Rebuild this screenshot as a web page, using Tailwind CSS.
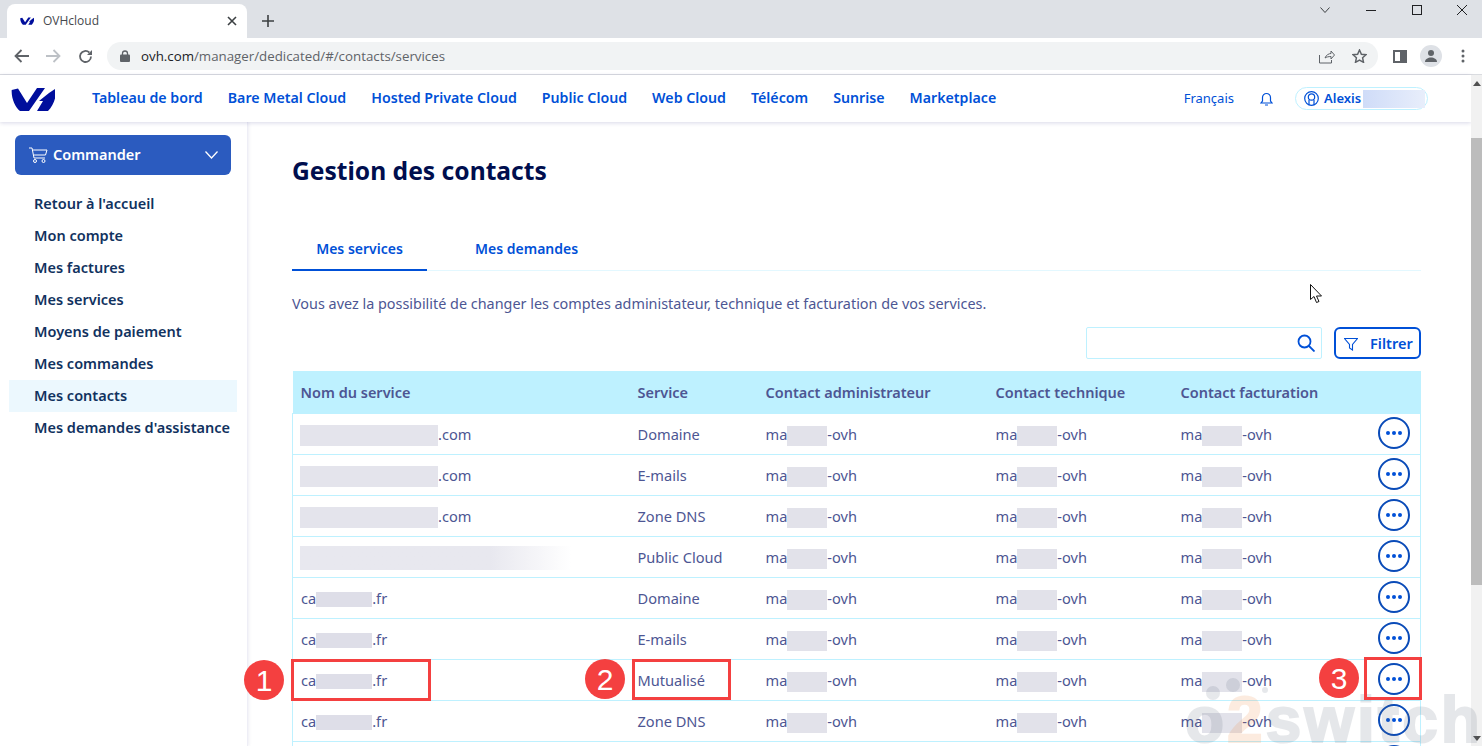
<!DOCTYPE html>
<html lang="fr">
<head>
<meta charset="UTF-8">
<title>OVHcloud - Gestion des contacts</title>
<script src="https://cdn.jsdelivr.net/npm/@tailwindcss/browser@4"></script>
</head>
<body class="bg-white">
<div class="relative w-[1482px] h-[746px] overflow-hidden flex flex-col font-['Noto_Sans',sans-serif]">

  <!-- Browser tab strip -->
  <div class="h-[38px] shrink-0 bg-[#dee1e6] flex items-end pl-[7px] relative">
    <div class="w-[240px] h-[34px] bg-white rounded-t-[8px] flex items-center pl-[13px] pr-[10px] font-['Open_Sans',sans-serif] text-[12px] text-[#45494e]">
      <svg class="w-[14px] h-[8px] mr-[9px]" viewBox="0 0 44 24"><path fill="#000e9c" d="M.7 3L7 1.500l9 14.500L26 1h8L18 24H9C4 20 .2 11 .7 3zM44 2c2 7-1 16-7 22H26l6-10h-4l10-8z"/></svg>
      <span>OVHcloud</span>
      <svg class="w-[10px] h-[10px] ml-auto" viewBox="0 0 10 10"><path d="M1 1l8 8M9 1l-8 8" stroke="#3c4043" stroke-width="1.6"/></svg>
    </div>
    <svg class="w-[12px] h-[12px] ml-[15px] mb-[11px]" viewBox="0 0 12 12"><path d="M6 0v12M0 6h12" stroke="#3c4043" stroke-width="1.6"/></svg>
    <div class="ml-auto self-start flex items-center h-[20px]">
      <svg class="w-[10px] h-[6px] mr-[36px]" viewBox="0 0 10 6"><path d="M.5.5L5 5.5 9.500.5" fill="none" stroke="#3c4043"/></svg>
      <svg class="w-[10px] h-[1px] mr-[36px]" viewBox="0 0 10 1"><path d="M0 .5h10" stroke="#202124"/></svg>
      <div class="w-[10px] h-[10px] border border-[#202124] mr-[35px]"></div>
      <svg class="w-[10px] h-[10px] mr-[15px]" viewBox="0 0 10 10"><path d="M0 0l10 10M10 0L0 10" stroke="#202124"/></svg>
    </div>
  </div>

  <!-- Browser toolbar -->
  <div class="h-[37px] shrink-0 bg-white border-b border-[#dadce0] flex items-center pl-[14px]">
    <svg class="w-[15px] h-[14px] mr-[17px]" viewBox="0 0 15 14"><path d="M15 7H2M7.500 1L1.500 7l6 6" fill="none" stroke="#5f6368" stroke-width="1.800"/></svg>
    <svg class="w-[15px] h-[14px] mr-[17px]" viewBox="0 0 15 14"><path d="M0 7h13M7.500 1l6 6-6 6" fill="none" stroke="#bdc1c6" stroke-width="1.800"/></svg>
    <svg class="w-[15px] h-[15px] mr-[14px]" viewBox="0 0 15 15"><path d="M13 7.500A5.500 5.500 0 1 1 11.300 3.500" fill="none" stroke="#5f6368" stroke-width="1.800"/><path d="M14 1v5H9z" fill="#5f6368"/></svg>
    <div class="w-[1271px] h-[28px] rounded-full bg-[#f1f3f4] flex items-center pl-[13px] font-['Open_Sans',sans-serif] text-[13.300px]">
      <svg class="w-[10px] h-[12px] mr-[11px]" viewBox="0 0 10 12"><path d="M2.500 5V3.500a2.500 2.500 0 0 1 5 0V5" fill="none" stroke="#5f6368" stroke-width="1.300"/><rect y="4.500" width="10" height="7.500" rx="1" fill="#5f6368"/></svg>
      <span class="mt-[2px] text-[#202124]">ovh.com</span><span class="mt-[2px] text-[#5f6368]">/manager/dedicated/#/contacts/services</span>
      <svg class="w-[16px] h-[15px] ml-auto mr-[17px]" viewBox="0 0 16 15"><path d="M.500 6v8h12v-3M6 9c1-3 4-4.500 6-4.500V2l3.500 4-3.500 4V7.500C9.500 7.500 7.500 8 6 9z" fill="none" stroke="#5f6368"/></svg>
      <svg class="w-[15px] h-[14px] mr-[11px]" viewBox="0 0 15 14"><path d="M7.500 1l1.900 4.200 4.600.500-3.400 3.100.900 4.500-4-2.300-4 2.300.900-4.500L1 5.700l4.600-.500z" fill="none" stroke="#5f6368" stroke-width="1.500"/></svg>
    </div>
    <div class="w-[14px] h-[13px] ml-[15px] border-[2px] border-[#5f6368] border-r-[7px]"></div>
    <div class="w-[22px] h-[22px] ml-[13px] rounded-full bg-[#dee1e6] flex items-center justify-center">
      <svg class="w-[14px] h-[14px]" viewBox="0 0 14 14"><circle cx="7" cy="4" r="3" fill="#5f6368"/><path d="M1 13c0-3 3-4.500 6-4.500s6 1.500 6 4.500z" fill="#5f6368"/></svg>
    </div>
    <svg class="w-[4px] h-[14px] ml-[19px]" viewBox="0 0 4 14"><circle cx="2" cy="2" r="1.500" fill="#5f6368"/><circle cx="2" cy="7" r="1.500" fill="#5f6368"/><circle cx="2" cy="12" r="1.500" fill="#5f6368"/></svg>
  </div>

  <!-- Page area -->
  <div class="flex-1 flex min-h-0 relative">
    <div class="flex-1 min-w-0 flex flex-col">

      <!-- Manager header -->
      <header class="h-[47px] shrink-0 bg-white shadow-[0_1px_4px_rgba(40,40,120,0.18)] flex items-center pl-[11px] relative z-10">
        <svg class="w-[44px] h-[24px] mr-[37px]" viewBox="0 0 44 24"><path fill="#000e9c" d="M.7 3L7 1.500l9 14.500L26 1h8L18 24H9C4 20 .2 11 .7 3zM44 2c2 7-1 16-7 22H26l6-10h-4l10-8z"/></svg>
        <nav class="flex gap-[25px] pb-[2px] text-[14.200px] font-semibold text-[#0050d7]">
          <a>Tableau de bord</a><a>Bare Metal Cloud</a><a>Hosted Private Cloud</a><a>Public Cloud</a><a>Web Cloud</a><a>Télécom</a><a>Sunrise</a><a>Marketplace</a>
        </nav>
        <span class="ml-auto text-[13px] text-[#0050d7]">Français</span>
        <svg class="w-[13px] h-[14px] ml-[26px]" viewBox="0 0 13 14"><path d="M1 11h11l-1.500-2V5.500a4 4 0 0 0-8 0V9zM5 13h3" fill="none" stroke="#0050d7" stroke-width="1.200"/></svg>
        <div class="ml-[22px] mr-[43px] w-[133px] h-[23px] rounded-full border border-[#bef1ff] flex items-center pl-[8px] text-[13px] font-semibold text-[#0050d7]">
          <svg class="w-[15px] h-[15px] mr-[5px]" viewBox="0 0 15 15"><circle cx="7.500" cy="7.500" r="6.800" fill="none" stroke="#0050d7" stroke-width="1.200"/><circle cx="7.500" cy="6" r="3.200" fill="none" stroke="#0050d7" stroke-width="1.200"/><path d="M5 14V9M10 14V9" stroke="#0050d7" stroke-width="1.200"/></svg>
          <span>Alexis</span>
          <div class="w-[62px] h-[18px] ml-[2px] bg-gradient-to-r from-[#cfdcf8] to-[#e8eefb]"></div>
        </div>
      </header>

      <div class="flex-1 flex min-h-0">
        <!-- Sidebar -->
        <aside class="w-[248px] shrink-0 bg-white border-r border-[#eeeef6] shadow-[1px_0_3px_rgba(40,40,120,0.08)] pt-[13px] pl-[9px] pr-[10px]">
          <button class="ml-[6px] w-[216px] h-[40px] rounded-[6px] bg-[#2b5bbf] flex items-center pl-[14px] pr-[13px] text-white text-[14.500px] font-semibold">
            <svg class="w-[20px] h-[16px] mr-[4px]" viewBox="0 0 20 16"><path d="M0 1h3l2 10h11M3.500 3H18l-1.500 5H4.600" fill="none" stroke="#fff"/><circle cx="6" cy="14" r="1.500" fill="none" stroke="#fff"/><circle cx="14.500" cy="14" r="1.500" fill="none" stroke="#fff"/></svg>
            <span>Commander</span>
            <svg class="w-[13px] h-[8px] ml-auto" viewBox="0 0 13 8"><path d="M.5.5L6.500 7 12.500.5" fill="none" stroke="#fff" stroke-width="1.300"/></svg>
          </button>
          <ul class="mt-[13px] text-[14.500px] font-semibold text-[#113260]">
            <li class="h-[32px] flex items-center pl-[25px]">Retour à l'accueil</li>
            <li class="h-[32px] flex items-center pl-[25px]">Mon compte</li>
            <li class="h-[32px] flex items-center pl-[25px]">Mes factures</li>
            <li class="h-[32px] flex items-center pl-[25px]">Mes services</li>
            <li class="h-[32px] flex items-center pl-[25px]">Moyens de paiement</li>
            <li class="h-[32px] flex items-center pl-[25px]">Mes commandes</li>
            <li class="h-[32px] flex items-center pl-[25px] bg-[#ecf8fe]">Mes contacts</li>
            <li class="h-[32px] flex items-center pl-[25px] whitespace-nowrap">Mes demandes d'assistance</li>
          </ul>
        </aside>

        <!-- Main content -->
        <main class="flex-1 min-w-0 pl-[44px] pr-[50px]">
          <h1 class="mt-[31px] h-[36px] leading-[36px] text-[24.600px] font-bold text-[#000e4e]">Gestion des contacts</h1>

          <div class="mt-[43px] h-[39px] flex border-b border-[#e3f8ff] text-[14px] font-semibold text-[#0050d7]">
            <div class="w-[135px] h-[39px] border-b-[2px] border-[#0050d7] flex items-center justify-center pb-[4px]">Mes services</div>
            <div class="ml-[48px] h-[39px] flex items-center pb-[6px]">Mes demandes</div>
          </div>

          <p class="mt-[23px] h-[20px] leading-[20px] text-[14.400px] text-[#4d5693]">Vous avez la possibilité de changer les comptes administateur, technique et facturation de vos services.</p>

          <div class="mt-[13px] flex justify-end">
            <div class="w-[236px] h-[32px] border border-[#bef1ff] rounded-[2px] flex items-center justify-end pr-[6px]">
              <svg class="w-[18px] h-[18px]" viewBox="0 0 18 18"><circle cx="7.500" cy="7.500" r="6" fill="none" stroke="#0050d7" stroke-width="1.800"/><path d="M12 12l5.500 5.500" stroke="#0050d7" stroke-width="1.800"/></svg>
            </div>
            <button class="ml-[12px] w-[87px] h-[32px] border-[2px] border-[#0050d7] rounded-[6px] flex items-center pl-[8px] pt-[2px] text-[14.500px] font-semibold text-[#0050d7]">
              <svg class="w-[14px] h-[13px] mr-[12px]" viewBox="0 0 14 13"><path d="M.5.5h13L8.500 6.500V12L5.500 10V6.500z" fill="none" stroke="#0050d7" stroke-width="1.100"/></svg>
              Filtrer
            </button>
          </div>

          <table class="mt-[12px] w-[1129px] table-fixed border-collapse text-[14.600px] text-[#4d5693]">
            <thead>
              <tr class="h-[42px] bg-[#bef1ff] font-semibold text-left text-[14.500px]">
                <th class="w-[337px] pl-[8px] pt-[3px] font-semibold">Nom du service</th>
                <th class="w-[128px] pl-[8px] pt-[3px] font-semibold">Service</th>
                <th class="w-[230px] pl-[8px] pt-[3px] font-semibold">Contact administrateur</th>
                <th class="w-[185px] pl-[8px] pt-[3px] font-semibold">Contact technique</th>
                <th class="w-[185px] pl-[8px] pt-[3px] font-semibold">Contact facturation</th>
                <th></th>
              </tr>
            </thead>
            <tbody class="[&>tr]:h-[41px] [&>tr]:border [&>tr]:border-[#bef1ff] [&_td]:pl-[8px] [&_td]:pt-[2px]">
              <tr>
                <td class="!pl-[7px]"><span class="inline-block align-middle -my-[6px] w-[138px] h-[21px] bg-[#e4e4ec]"></span>.com</td><td>Domaine</td>
                <td>ma<span class="inline-block align-middle -my-[6px] w-[40px] h-[20px] bg-[#e2e2ea]"></span>-ovh</td>
                <td>ma<span class="inline-block align-middle -my-[6px] w-[40px] h-[20px] bg-[#e2e2ea]"></span>-ovh</td>
                <td>ma<span class="inline-block align-middle -my-[6px] w-[40px] h-[20px] bg-[#e2e2ea]"></span>-ovh</td>
                <td><span class="flex w-[32px] h-[32px] ml-[12px] -mt-[4px] rounded-full border-[2px] border-[#0a4bb8] items-center justify-center gap-[2px]"><i class="w-[4px] h-[4px] rounded-full bg-[#0050d7]"></i><i class="w-[4px] h-[4px] rounded-full bg-[#0050d7]"></i><i class="w-[4px] h-[4px] rounded-full bg-[#0050d7]"></i></span></td>
              </tr>
              <tr>
                <td class="!pl-[7px]"><span class="inline-block align-middle -my-[6px] w-[138px] h-[21px] bg-[#e4e4ec]"></span>.com</td><td>E-mails</td>
                <td>ma<span class="inline-block align-middle -my-[6px] w-[40px] h-[20px] bg-[#e2e2ea]"></span>-ovh</td>
                <td>ma<span class="inline-block align-middle -my-[6px] w-[40px] h-[20px] bg-[#e2e2ea]"></span>-ovh</td>
                <td>ma<span class="inline-block align-middle -my-[6px] w-[40px] h-[20px] bg-[#e2e2ea]"></span>-ovh</td>
                <td><span class="flex w-[32px] h-[32px] ml-[12px] -mt-[4px] rounded-full border-[2px] border-[#0a4bb8] items-center justify-center gap-[2px]"><i class="w-[4px] h-[4px] rounded-full bg-[#0050d7]"></i><i class="w-[4px] h-[4px] rounded-full bg-[#0050d7]"></i><i class="w-[4px] h-[4px] rounded-full bg-[#0050d7]"></i></span></td>
              </tr>
              <tr>
                <td class="!pl-[7px]"><span class="inline-block align-middle -my-[6px] w-[138px] h-[21px] bg-[#e4e4ec]"></span>.com</td><td>Zone DNS</td>
                <td>ma<span class="inline-block align-middle -my-[6px] w-[40px] h-[20px] bg-[#e2e2ea]"></span>-ovh</td>
                <td>ma<span class="inline-block align-middle -my-[6px] w-[40px] h-[20px] bg-[#e2e2ea]"></span>-ovh</td>
                <td>ma<span class="inline-block align-middle -my-[6px] w-[40px] h-[20px] bg-[#e2e2ea]"></span>-ovh</td>
                <td><span class="flex w-[32px] h-[32px] ml-[12px] -mt-[4px] rounded-full border-[2px] border-[#0a4bb8] items-center justify-center gap-[2px]"><i class="w-[4px] h-[4px] rounded-full bg-[#0050d7]"></i><i class="w-[4px] h-[4px] rounded-full bg-[#0050d7]"></i><i class="w-[4px] h-[4px] rounded-full bg-[#0050d7]"></i></span></td>
              </tr>
              <tr>
                <td class="!pl-[7px]"><span class="block w-[271px] h-[24px] bg-gradient-to-r from-[#e8e8ef] from-70% to-white"></span></td><td>Public Cloud</td>
                <td>ma<span class="inline-block align-middle -my-[6px] w-[40px] h-[20px] bg-[#e2e2ea]"></span>-ovh</td>
                <td>ma<span class="inline-block align-middle -my-[6px] w-[40px] h-[20px] bg-[#e2e2ea]"></span>-ovh</td>
                <td>ma<span class="inline-block align-middle -my-[6px] w-[40px] h-[20px] bg-[#e2e2ea]"></span>-ovh</td>
                <td><span class="flex w-[32px] h-[32px] ml-[12px] -mt-[4px] rounded-full border-[2px] border-[#0a4bb8] items-center justify-center gap-[2px]"><i class="w-[4px] h-[4px] rounded-full bg-[#0050d7]"></i><i class="w-[4px] h-[4px] rounded-full bg-[#0050d7]"></i><i class="w-[4px] h-[4px] rounded-full bg-[#0050d7]"></i></span></td>
              </tr>
              <tr>
                <td>ca<span class="inline-block align-middle -my-[6px] w-[56px] h-[15px] bg-[#dedee8]"></span>.fr</td><td>Domaine</td>
                <td>ma<span class="inline-block align-middle -my-[6px] w-[40px] h-[20px] bg-[#e2e2ea]"></span>-ovh</td>
                <td>ma<span class="inline-block align-middle -my-[6px] w-[40px] h-[20px] bg-[#e2e2ea]"></span>-ovh</td>
                <td>ma<span class="inline-block align-middle -my-[6px] w-[40px] h-[20px] bg-[#e2e2ea]"></span>-ovh</td>
                <td><span class="flex w-[32px] h-[32px] ml-[12px] -mt-[4px] rounded-full border-[2px] border-[#0a4bb8] items-center justify-center gap-[2px]"><i class="w-[4px] h-[4px] rounded-full bg-[#0050d7]"></i><i class="w-[4px] h-[4px] rounded-full bg-[#0050d7]"></i><i class="w-[4px] h-[4px] rounded-full bg-[#0050d7]"></i></span></td>
              </tr>
              <tr>
                <td>ca<span class="inline-block align-middle -my-[6px] w-[56px] h-[15px] bg-[#dedee8]"></span>.fr</td><td>E-mails</td>
                <td>ma<span class="inline-block align-middle -my-[6px] w-[40px] h-[20px] bg-[#e2e2ea]"></span>-ovh</td>
                <td>ma<span class="inline-block align-middle -my-[6px] w-[40px] h-[20px] bg-[#e2e2ea]"></span>-ovh</td>
                <td>ma<span class="inline-block align-middle -my-[6px] w-[40px] h-[20px] bg-[#e2e2ea]"></span>-ovh</td>
                <td><span class="flex w-[32px] h-[32px] ml-[12px] -mt-[4px] rounded-full border-[2px] border-[#0a4bb8] items-center justify-center gap-[2px]"><i class="w-[4px] h-[4px] rounded-full bg-[#0050d7]"></i><i class="w-[4px] h-[4px] rounded-full bg-[#0050d7]"></i><i class="w-[4px] h-[4px] rounded-full bg-[#0050d7]"></i></span></td>
              </tr>
              <tr>
                <td>ca<span class="inline-block align-middle -my-[6px] w-[56px] h-[15px] bg-[#dedee8]"></span>.fr</td><td>Mutualisé</td>
                <td>ma<span class="inline-block align-middle -my-[6px] w-[40px] h-[20px] bg-[#e2e2ea]"></span>-ovh</td>
                <td>ma<span class="inline-block align-middle -my-[6px] w-[40px] h-[20px] bg-[#e2e2ea]"></span>-ovh</td>
                <td>ma<span class="inline-block align-middle -my-[6px] w-[40px] h-[20px] bg-[#e2e2ea]"></span>-ovh</td>
                <td><span class="flex w-[32px] h-[32px] ml-[12px] -mt-[4px] rounded-full border-[2px] border-[#0a4bb8] items-center justify-center gap-[2px]"><i class="w-[4px] h-[4px] rounded-full bg-[#0050d7]"></i><i class="w-[4px] h-[4px] rounded-full bg-[#0050d7]"></i><i class="w-[4px] h-[4px] rounded-full bg-[#0050d7]"></i></span></td>
              </tr>
              <tr>
                <td>ca<span class="inline-block align-middle -my-[6px] w-[56px] h-[15px] bg-[#dedee8]"></span>.fr</td><td>Zone DNS</td>
                <td>ma<span class="inline-block align-middle -my-[6px] w-[40px] h-[20px] bg-[#e2e2ea]"></span>-ovh</td>
                <td>ma<span class="inline-block align-middle -my-[6px] w-[40px] h-[20px] bg-[#e2e2ea]"></span>-ovh</td>
                <td>ma<span class="inline-block align-middle -my-[6px] w-[40px] h-[20px] bg-[#e2e2ea]"></span>-ovh</td>
                <td><span class="flex w-[32px] h-[32px] ml-[12px] -mt-[4px] rounded-full border-[2px] border-[#0a4bb8] items-center justify-center gap-[2px]"><i class="w-[4px] h-[4px] rounded-full bg-[#0050d7]"></i><i class="w-[4px] h-[4px] rounded-full bg-[#0050d7]"></i><i class="w-[4px] h-[4px] rounded-full bg-[#0050d7]"></i></span></td>
              </tr>
              <tr>
                <td></td><td></td><td></td><td></td><td></td>
                <td><span class="flex w-[32px] h-[32px] ml-[12px] -mt-[4px] rounded-full border-[2px] border-[#0a4bb8]"></span></td>
              </tr>
            </tbody>
          </table>
        </main>
      </div>
    </div>

    <!-- Scrollbar -->
    <div class="w-[11px] shrink-0 bg-[#f1f1f1] flex flex-col items-center relative z-20">
      <div class="h-[16px] flex items-center"><div class="border-x-[4px] border-x-transparent border-b-[5px] border-b-[#505050]"></div></div>
      <div class="mt-[47px] w-full h-[447px] bg-[#bcbcbc]"></div>
      <div class="mt-auto h-[16px] flex items-center"><div class="border-x-[4px] border-x-transparent border-t-[5px] border-t-[#505050]"></div></div>
    </div>
  </div>

  <!-- Watermark -->
  <div class="absolute left-[1185px] top-[688px] opacity-[0.15] text-[64px] leading-[64px] tracking-[3px] font-bold font-['Liberation_Sans',sans-serif] text-[#5a6678] [-webkit-text-stroke:2px_#5a6678] pointer-events-none whitespace-nowrap z-30">o<span class="text-[#f08030] [-webkit-text-stroke:2px_#f08030]">2</span>switch</div>
  <div class="absolute left-[1206px] top-[686px] w-[14px] h-[14px] rounded-full bg-[#5a6678]/15 z-30"></div>
  <div class="absolute left-[1226px] top-[678px] w-[14px] h-[14px] rounded-full bg-[#5a6678]/15 z-30"></div>
  <div class="absolute left-[1262px] top-[687px] w-[6px] h-[6px] rounded-full bg-[#5a6678]/15 z-30"></div>

  <!-- Annotations -->
  <div class="absolute left-[291px] top-[659px] w-[140px] h-[42px] border-[3px] border-[#f44040] z-30"></div>
  <div class="absolute left-[632px] top-[659px] w-[99px] h-[41px] border-[3px] border-[#f44040] z-30"></div>
  <div class="absolute left-[1364px] top-[657px] w-[58px] h-[43px] border-[3px] border-[#f44040] z-30"></div>
  <div class="absolute left-[244px] top-[660px] w-[40px] h-[40px] rounded-full bg-[#f44040] text-white text-[30px] flex items-center justify-center font-['Liberation_Sans',sans-serif] z-30">1</div>
  <div class="absolute left-[585px] top-[659px] w-[40px] h-[40px] rounded-full bg-[#f44040] text-white text-[30px] flex items-center justify-center font-['Liberation_Sans',sans-serif] z-30">2</div>
  <div class="absolute left-[1319px] top-[658px] w-[40px] h-[40px] rounded-full bg-[#f44040] text-white text-[30px] flex items-center justify-center font-['Liberation_Sans',sans-serif] z-30">3</div>

  <!-- Mouse cursor -->
  <svg class="absolute left-[1310px] top-[284px] w-[13px] h-[19px] z-30" viewBox="0 0 13 19"><path d="M.5.5v15l3.500-3 2.500 6 2.500-1-2.500-5.500h5z" fill="#fff" stroke="#111"/></svg>
</div>
</body>
</html>
